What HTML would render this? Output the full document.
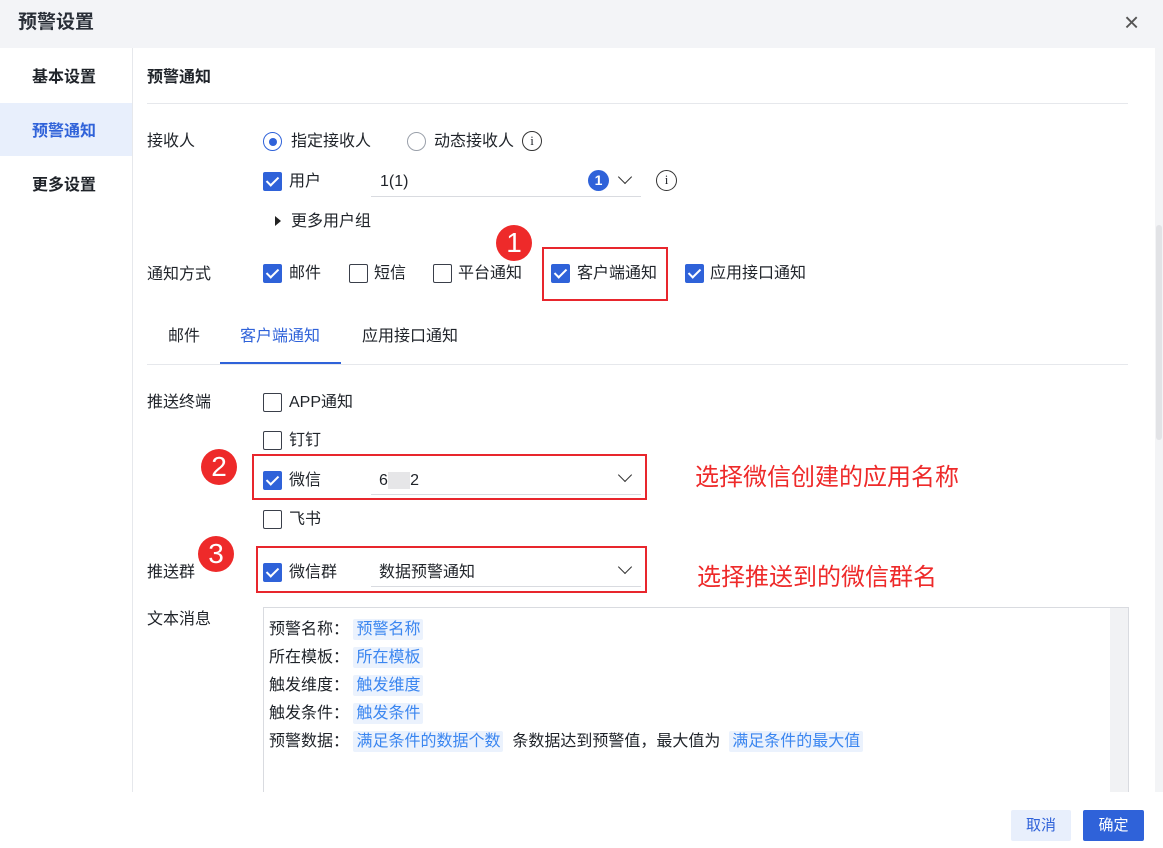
<!DOCTYPE html>
<html><head><meta charset="utf-8"><style>
*{margin:0;padding:0;box-sizing:border-box}
body{width:1163px;height:848px;overflow:hidden;background:#fff;font-family:"Liberation Sans","Noto Sans CJK SC",sans-serif;font-size:16px;color:#1f2329;position:relative}
.a{position:absolute;white-space:nowrap;line-height:24px}
.cb{position:absolute;width:19px;height:19px;border:1.5px solid #3a3f4a;border-radius:2px;background:#fff}
.cb.on{background:#2f62d9;border-color:#2f62d9}
.cb.on::after{content:"";position:absolute;left:5px;top:1px;width:5px;height:10px;border:solid #fff;border-width:0 2px 2px 0;transform:rotate(45deg)}
.red{position:absolute;border:2px solid #e8262d}
.num{position:absolute;width:36px;height:36px;border-radius:50%;background:#ee2a2a;color:#fff;font-size:28px;text-align:center;line-height:36px}
.sel{position:absolute;border-bottom:1px solid #d9dbe0;height:30px}
.chev{position:absolute;width:10px;height:10px;border:solid #333;border-width:0 1.6px 1.6px 0;transform:rotate(45deg)}
.tag{background:#ebf2fd;color:#3b86f0;padding:2px 3px;border-radius:2px}
.ta div{height:28px;line-height:28px}
</style></head><body>
<div class="a" style="left:0;top:0;width:1163px;height:48px;background:#f3f4f7"></div>
<div class="a" style="left:18px;top:11px;font-size:19px;line-height:24px;font-weight:bold;color:#2a2f38">预警设置</div>
<div class="a" style="left:1124px;top:8px;font-size:26px;line-height:28px;color:#555">×</div>
<div class="a" style="left:132px;top:48px;width:1px;height:745px;background:#e6e8ec"></div>
<div class="a" style="left:0;top:103px;width:132px;height:53px;background:#e8effc"></div>
<div class="a" style="left:32px;top:66px;font-weight:bold">基本设置</div>
<div class="a" style="left:32px;top:120px;font-weight:bold;color:#2f62d9">预警通知</div>
<div class="a" style="left:32px;top:174px;font-weight:bold">更多设置</div>
<div class="a" style="left:1155px;top:48px;width:8px;height:745px;background:#f3f4f6"></div>
<div class="a" style="left:1156px;top:225px;width:6px;height:215px;background:#e2e3e6;border-radius:3px"></div>

<div class="a" style="left:147px;top:66px;font-weight:bold">预警通知</div>
<div class="a" style="left:147px;top:103px;width:981px;height:1px;background:#e6e8ec"></div>
<div class="a" style="left:147px;top:130px">接收人</div>
<div class="a" style="left:263px;top:132px;width:19px;height:19px;border:1.5px solid #2f62d9;border-radius:50%"></div>
<div class="a" style="left:268.5px;top:137.5px;width:8px;height:8px;background:#2f62d9;border-radius:50%"></div>
<div class="a" style="left:291px;top:130px">指定接收人</div>
<div class="a" style="left:407px;top:132px;width:19px;height:19px;border:1.5px solid #9aa0aa;border-radius:50%"></div>
<div class="a" style="left:434px;top:130px">动态接收人</div>
<div class="a" style="left:522px;top:131px;width:20px;height:20px;border:1.5px solid #333;border-radius:50%;font-size:13px;text-align:center;line-height:17px;font-family:'Liberation Serif'">i</div>
<div class="cb on" style="left:263px;top:172px"></div>
<div class="a" style="left:289px;top:170px">用户</div>
<div class="sel" style="left:371px;top:167px;width:270px"></div>
<div class="a" style="left:380px;top:170px">1(1)</div>
<div class="a" style="left:588px;top:170px;width:21px;height:21px;border-radius:50%;background:#2f62d9;color:#fff;font-size:14px;font-weight:bold;text-align:center;line-height:21px">1</div>
<div class="chev" style="left:620px;top:172px"></div>
<div class="a" style="left:656px;top:170px;width:21px;height:21px;border:1.5px solid #333;border-radius:50%;font-size:13px;text-align:center;line-height:18px;font-family:'Liberation Serif'">i</div>
<div class="a" style="left:275px;top:216px;width:0;height:0;border-left:6px solid #222;border-top:5px solid transparent;border-bottom:5px solid transparent"></div>
<div class="a" style="left:291px;top:210px">更多用户组</div>

<div class="a" style="left:147px;top:263px">通知方式</div>
<div class="cb on" style="left:263px;top:264px"></div><div class="a" style="left:289px;top:262px">邮件</div>
<div class="cb" style="left:349px;top:264px"></div><div class="a" style="left:374px;top:262px">短信</div>
<div class="cb" style="left:433px;top:264px"></div><div class="a" style="left:458px;top:262px">平台通知</div>
<div class="cb on" style="left:551px;top:264px"></div><div class="a" style="left:577px;top:262px">客户端通知</div>
<div class="cb on" style="left:685px;top:264px"></div><div class="a" style="left:710px;top:262px">应用接口通知</div>
<div class="red" style="left:542px;top:247px;width:126px;height:54px"></div>
<div class="num" style="left:496px;top:225px">1</div>

<div class="a" style="left:168px;top:325px">邮件</div>
<div class="a" style="left:240px;top:325px;color:#2f62d9">客户端通知</div>
<div class="a" style="left:362px;top:325px">应用接口通知</div>
<div class="a" style="left:147px;top:364px;width:981px;height:1px;background:#e6e8ec"></div>
<div class="a" style="left:220px;top:362px;width:121px;height:2px;background:#2f62d9"></div>

<div class="a" style="left:147px;top:391px">推送终端</div>
<div class="cb" style="left:263px;top:393px"></div><div class="a" style="left:289px;top:391px">APP通知</div>
<div class="cb" style="left:263px;top:431px"></div><div class="a" style="left:289px;top:429px">钉钉</div>
<div class="cb on" style="left:263px;top:471px"></div><div class="a" style="left:289px;top:469px">微信</div>
<div class="sel" style="left:371px;top:465px;width:270px"></div>
<div class="a" style="left:379px;top:469px">6<span style="color:#ddd;background:#e6e6e8">&nbsp;&nbsp;&nbsp;&nbsp;&nbsp;</span>2</div>
<div class="chev" style="left:620px;top:470px"></div>
<div class="red" style="left:252px;top:454px;width:395px;height:46px"></div>
<div class="num" style="left:201px;top:449px">2</div>
<div class="a" style="left:695px;top:463px;font-size:24px;line-height:30px;color:#ee2a2a">选择微信创建的应用名称</div>
<div class="cb" style="left:263px;top:510px"></div><div class="a" style="left:289px;top:508px">飞书</div>

<div class="a" style="left:147px;top:561px">推送群</div>
<div class="cb on" style="left:263px;top:563px"></div><div class="a" style="left:289px;top:561px">微信群</div>
<div class="sel" style="left:371px;top:557px;width:270px"></div>
<div class="a" style="left:379px;top:561px">数据预警通知</div>
<div class="chev" style="left:620px;top:562px"></div>
<div class="red" style="left:256px;top:546px;width:391px;height:47px"></div>
<div class="num" style="left:198px;top:536px">3</div>
<div class="a" style="left:697px;top:563px;font-size:24px;line-height:30px;color:#ee2a2a">选择推送到的微信群名</div>

<div class="a" style="left:147px;top:608px">文本消息</div>
<div class="a" style="left:263px;top:607px;width:866px;height:190px;border:1px solid #d9dbe0"></div>
<div class="a" style="left:1110px;top:608px;width:18px;height:185px;background:#f1f2f4"></div>
<div class="a ta" style="left:269px;top:616px;font-size:16px">
<div>预警名称：&nbsp;<span class="tag">预警名称</span></div>
<div>所在模板：&nbsp;<span class="tag">所在模板</span></div>
<div>触发维度：&nbsp;<span class="tag">触发维度</span></div>
<div>触发条件：&nbsp;<span class="tag">触发条件</span></div>
<div>预警数据：&nbsp;<span class="tag">满足条件的数据个数</span>&nbsp; 条数据达到预警值，最大值为&nbsp; <span class="tag">满足条件的最大值</span></div>
</div>
<div class="a" style="left:0;top:792px;width:1163px;height:56px;background:#fff"></div>
<div class="a" style="left:1011px;top:810px;width:60px;height:31px;background:#e8effc;color:#2f62d9;border-radius:2px;text-align:center;line-height:31px;font-size:15px">取消</div>
<div class="a" style="left:1083px;top:810px;width:61px;height:31px;background:#2f62d9;color:#fff;border-radius:2px;text-align:center;line-height:31px;font-size:15px">确定</div>
</body></html>
